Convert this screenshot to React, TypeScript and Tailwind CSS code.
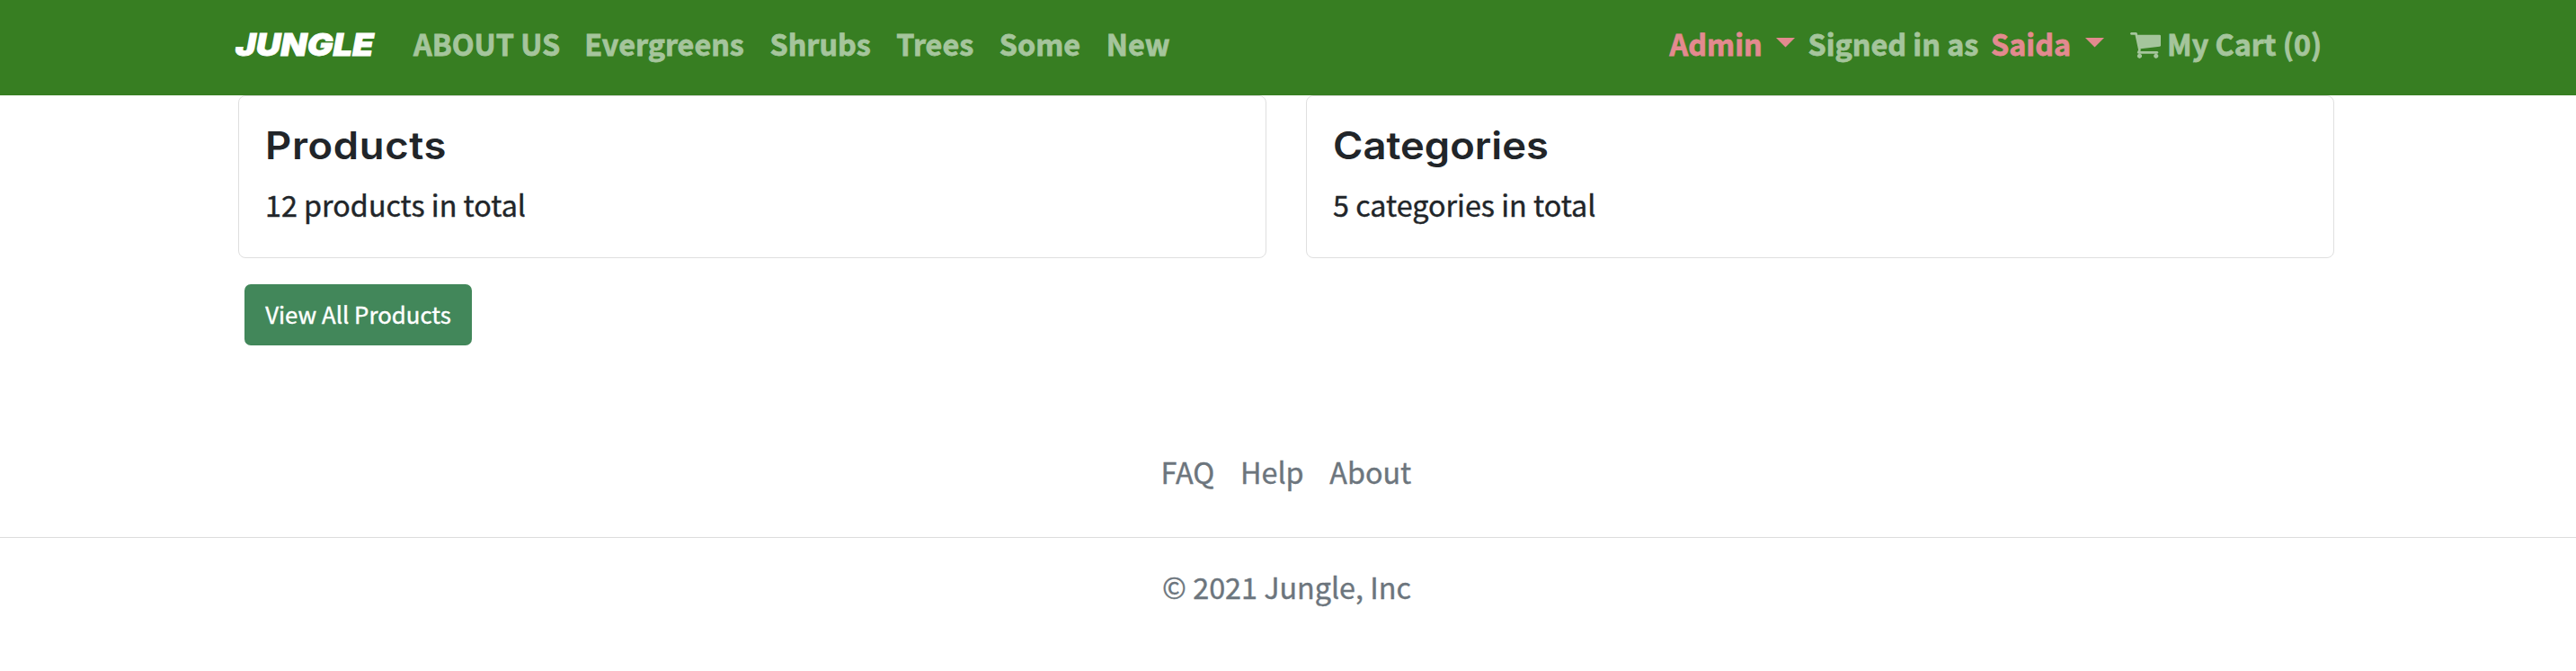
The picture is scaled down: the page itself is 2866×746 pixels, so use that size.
type NavLinkProps = { label: string; className?: string };

function NavLink({ label, className = "" }: NavLinkProps) {
  return (
    <a href="#" className={`whitespace-nowrap ${className}`}>
      {label}
    </a>
  );
}

function Caret() {
  return (
    <svg viewBox="0 0 21 10.5" className="mt-[17px] h-[10.5px] w-[21px] shrink-0 fill-[#e38a8f]">
      <path d="M0 0h21L10.5 10.5z" />
    </svg>
  );
}

function CartIcon() {
  return (
    <svg viewBox="64 256 1664 1408" className="mt-[11px] h-[29px] w-[34px] shrink-0 fill-current stroke-none">
      <path d="M704 1536q0 52-38 90t-90 38-90-38-38-90 38-90 90-38 90 38 38 90zm896 0q0 52-38 90t-90 38-90-38-38-90 38-90 90-38 90 38 38 90zm128-1088v512q0 24-16.5 42.5t-40.5 21.5l-1044 122q13 60 13 70 0 16-24 64h920q26 0 45 19t19 45-19 45-45 19h-1024q-26 0-45-19t-19-45q0-11 8-31.5t16-36 21.5-40 15.5-29.5l-177-823h-204q-26 0-45-19t-19-45 19-45 45-19h256q16 0 28.5 6.5t19.5 15.5 13 24.5 8 26 5.5 29.5 4.5 26h1201q26 0 45 19t19 45z" />
    </svg>
  );
}

function Navbar() {
  return (
    <nav className="flex h-[106px] items-start bg-[#377e22] pt-[25px] pl-[262px] text-[32.3px] leading-[46px] font-bold text-[#a5c59c] [-webkit-text-stroke:0.8px_currentColor]">
      <a
        href="#"
        className="w-[198px] origin-left scale-x-[1.11] font-['Inter',sans-serif] text-[34.4px] leading-[50px] font-black text-white italic [-webkit-text-stroke:0.8px_white]"
      >
        JUNGLE
      </a>
      <div className="flex gap-[28.7px]">
        <NavLink label="ABOUT US" className="-mr-[1.5px]" />
        <NavLink label="Evergreens" />
        <NavLink label="Shrubs" />
        <NavLink label="Trees" />
        <NavLink label="Some" />
        <NavLink label="New" />
      </div>
      <div className="ml-[556px] flex">
        <NavLink label="Admin" className="w-[118.7px] text-[#e38a8f]" />
        <Caret />
        <span className="ml-[14.3px] w-[203.6px] whitespace-nowrap">Signed in as</span>
        <NavLink label="Saida" className="w-[105.4px] text-[#e38a8f]" />
        <Caret />
        <a href="#" className="ml-[29px] flex gap-[6.6px] whitespace-nowrap">
          <CartIcon />
          My Cart (0)
        </a>
      </div>
    </nav>
  );
}

type CardProps = { title: string; text: string; titleClass?: string };

function SummaryCard({ title, text, titleClass = "" }: CardProps) {
  return (
    <section className="h-[181px] w-[1144px] rounded-[8px] border border-[#dfdfdf] pt-[29px] pl-[29px] text-[#212529]">
      <h2
        className={`w-fit origin-left scale-x-[1.08] font-['Inter',sans-serif] text-[42px] leading-[52px] font-semibold ${titleClass}`}
      >
        {title}
      </h2>
      <p className="mt-[16px] text-[32.3px] leading-[46px] [-webkit-text-stroke:0.4px_currentColor]">{text}</p>
    </section>
  );
}

export default function App() {
  return (
    <div className="h-[746px] overflow-hidden bg-white font-['Noto_Sans_CJK_SC','Noto_Sans',sans-serif]">
      <Navbar />
      <main className="pl-[265px]">
        <div className="flex gap-[44px]">
          <SummaryCard title="Products" text="12 products in total" titleClass="tracking-[0.6px]" />
          <SummaryCard title="Categories" text="5 categories in total" />
        </div>
        <button className="mt-[29px] ml-[7px] block h-[68px] w-[253px] rounded-[7px] bg-[#42875a] pb-[3px] text-[25.8px] leading-[64px] text-white [-webkit-text-stroke:0.4px_currentColor]">
          View All Products
        </button>
      </main>
      <footer className="text-[32.3px] leading-[46px] text-[#6c757d] [-webkit-text-stroke:0.4px_currentColor]">
        <div className="mt-[117px] flex h-[97px] gap-[28.7px] border-b border-[#dcdcdc] pl-[1291.6px]">
          <a href="#">FAQ</a>
          <a href="#">Help</a>
          <a href="#">About</a>
        </div>
        <p className="mt-[31px] pr-[3px] text-center">© 2021 Jungle, Inc</p>
      </footer>
    </div>
  );
}
